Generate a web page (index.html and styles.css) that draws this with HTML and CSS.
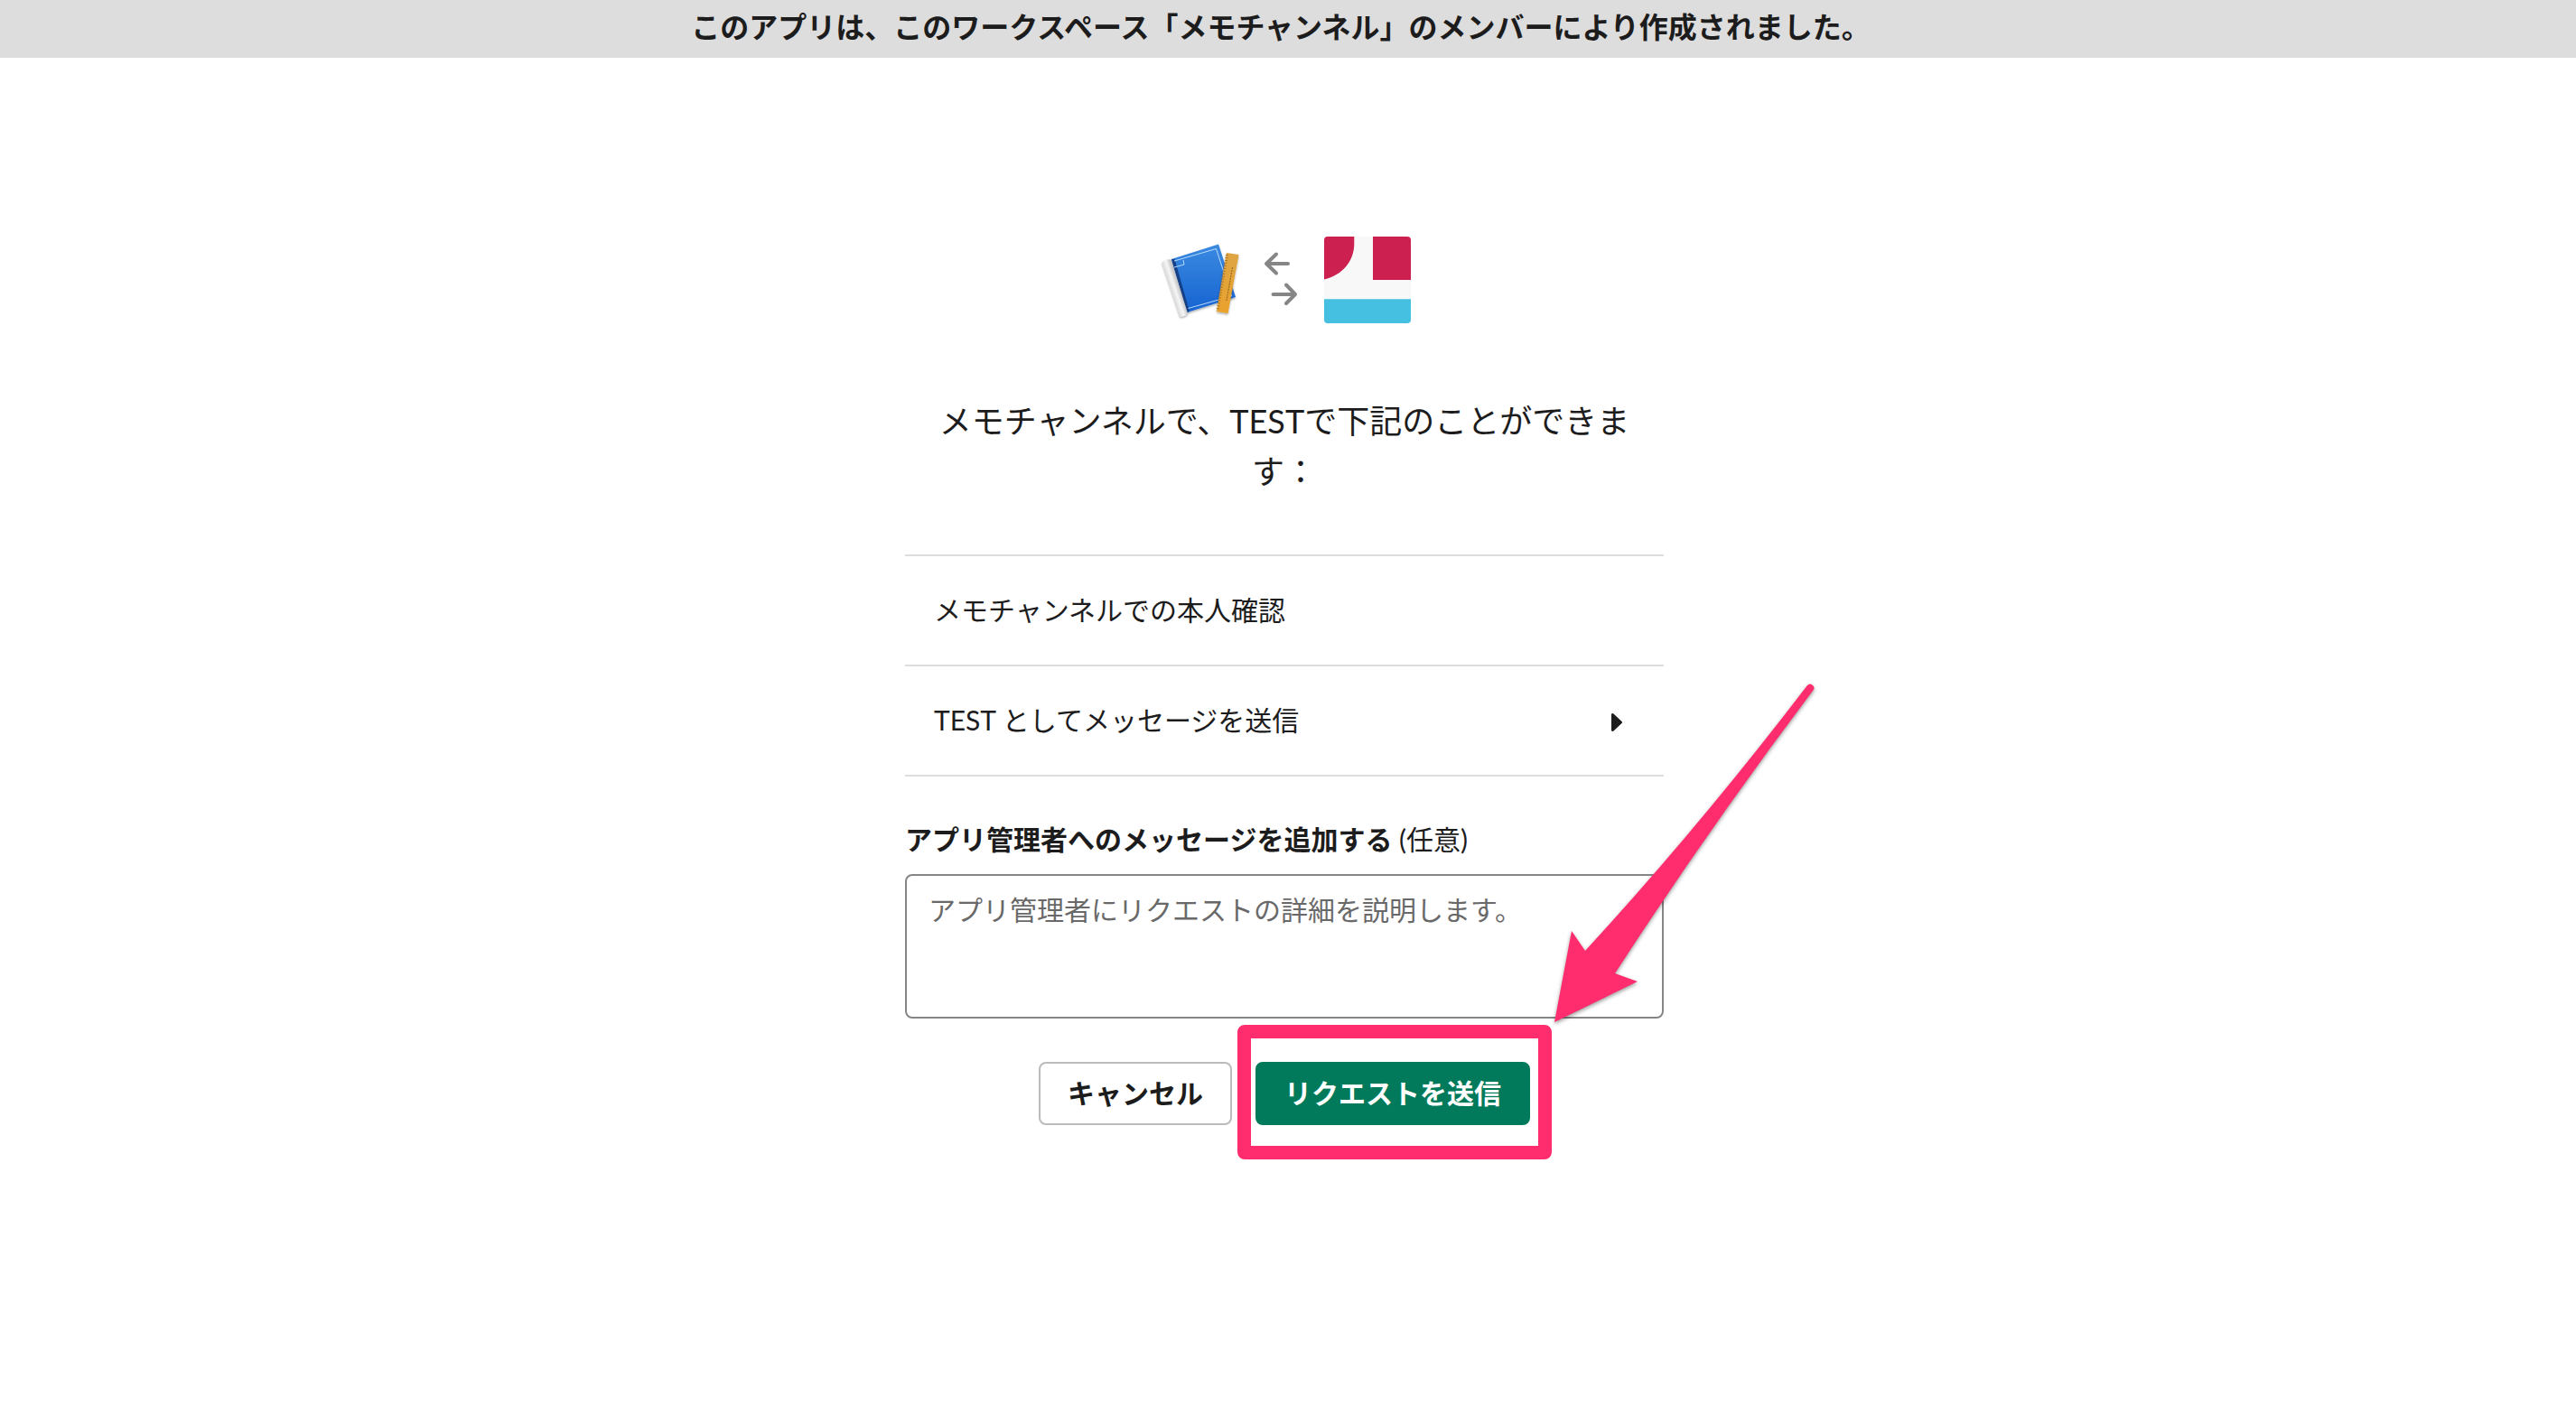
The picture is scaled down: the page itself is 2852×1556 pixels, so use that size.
FILE: index.html
```html
<!DOCTYPE html>
<html lang="ja">
<head>
<meta charset="utf-8">
<meta name="viewport" content="width=device-width, initial-scale=1">
<title>TEST | Slack</title>
<link rel="stylesheet" href="styles.css">
</head>
<body>
<header class="banner">このアプリは、このワークスペース「メモチャンネル」のメンバーにより作成されました。</header>
<main class="page">
  <div class="content">
    <div class="logos">
      <svg class="logo" viewBox="0 0 96 96" role="img" aria-label="TEST">
        <defs>
          <linearGradient id="sheet" x1="0" y1="0" x2="0" y2="1"><stop offset="0" stop-color="#3a8ae0"/><stop offset="1" stop-color="#1763d2"/></linearGradient>
          <linearGradient id="roll" gradientUnits="userSpaceOnUse" x1="14" y1="59" x2="26" y2="55"><stop offset="0" stop-color="#d9d9d9"/><stop offset=".4" stop-color="#f6f6f6"/><stop offset="1" stop-color="#a9a9ad"/></linearGradient>
          <linearGradient id="ruler" x1="0" y1="0" x2="0" y2="1"><stop offset="0" stop-color="#dda544"/><stop offset="1" stop-color="#eaa22c"/></linearGradient>
          <filter id="soft" x="-20%" y="-20%" width="140%" height="140%"><feDropShadow dx="0" dy="1.5" stdDeviation="1.2" flood-opacity=".35"/></filter>
        </defs>
        <g filter="url(#soft)">
          <path fill="url(#sheet)" d="M15 25 67 8.500 86 67 32 84Z"/>
          <path fill="#123f85" d="M15 25 18.500 25 35 83 32 84Z"/>
          <path fill="none" stroke="#b9dcff" stroke-width="1" d="M18 27 64.500 13.500 81.500 66 33.500 79.500M18 34 29 31 28 26"/>
          <path fill="url(#roll)" d="M4.500 28.500Q9 24 14.500 25.500L33 85Q30 89 24.500 88.500Z"/>
        </g>
        <g filter="url(#soft)">
          <path fill="url(#ruler)" d="M76 18 89.500 20 77.500 85 65 83Z"/>
          <path fill="none" stroke="#a8752a" stroke-width="3" stroke-dasharray="1 2" d="M76.500 20 66 82"/>
          <path fill="none" stroke="#9b6a21" stroke-width="1.200" stroke-dasharray="2 1" d="M82.500 34 76 71"/>
        </g>
      </svg>
      <svg class="exchange" viewBox="0 0 88 96" aria-hidden="true">
        <path d="M48 30H24M35 19.500 24 30 35 40.500M31.500 64H55.500M46 53.500 56 64 46 74"/>
      </svg>
      <svg class="logo logo-team" viewBox="0 0 96 96" role="img" aria-label="メモチャンネル">
        <path fill="#f8f8f9" d="M0 0H96V96H0Z"/>
        <path fill="#cc2050" d="M0 0H33.300V8C33.300 27 20 43 0 47.500ZM54 0H96V48H54Z"/>
        <path fill="#45c0e1" d="M0 69.300H96V96H0Z"/>
      </svg>
    </div>
    <h1 class="title">メモチャンネルで、TESTで下記のことができます：</h1>
    <ul class="scopes">
      <li class="scope">メモチャンネルでの本人確認</li>
      <li><button class="scope scope-toggle" type="button" aria-expanded="false">TEST としてメッセージを送信
        <svg class="caret" viewBox="0 -6 12 26" aria-hidden="true"><path d="M0 1Q1-1 3 1L11 8.500Q13 10 11 11.500L3 19Q1 21 0 19Z"/></svg>
      </button></li>
    </ul>
    <form class="request">
      <label class="label" for="message"><strong>アプリ管理者へのメッセージを追加する</strong> (任意)</label>
      <textarea class="message" id="message" placeholder="アプリ管理者にリクエストの詳細を説明します。"></textarea>
      <div class="actions">
        <button class="button" type="button">キャンセル</button>
        <div class="marked">
          <button class="button button-primary" type="submit">リクエストを送信</button>
          <div class="highlight"></div>
          <svg class="arrow" viewBox="0 0 300 400" aria-hidden="true"><path d="M5 380 24 279 39 301Q165 164 285 7Q288 4 291 7Q294 10 291 13Q175 167 72 326L97 335Z"/></svg>
        </div>
      </div>
    </form>
  </div>
</main>
</body>
</html>
```
FILE: styles.css
```css
* { box-sizing: border-box; }

body {
  margin: 0;
  background: #fff;
  color: #1d1c1d;
  font-family: Lato, "Noto Sans CJK JP", sans-serif;
  font-size: 30px;
  line-height: 40px;
}

.banner {
  padding: 10px 16px 14px 0;
  background: #ddd;
  font-size: 32px;
  font-weight: 700;
  text-align: center;
}

.page { padding: 198px 8px 80px 0; }

.content {
  max-width: 840px;
  margin: 0 auto;
}

.logos {
  display: flex;
  justify-content: center;
}

.logo { width: 96px; height: 96px; }
.logo-team { border-radius: 4px; }

.exchange {
  width: 88px;
  height: 96px;
  fill: none;
  stroke: #868686;
  stroke-width: 4;
  stroke-linecap: round;
  stroke-linejoin: round;
}

.title {
  margin: 80px 0 64px;
  padding: 0 32px;
  font-size: 36px;
  font-weight: 400;
  line-height: 56px;
  text-align: center;
}

.scopes {
  margin: 0;
  padding: 0;
  border-top: 2px solid #ddd;
  list-style: none;
}

.scope {
  display: flex;
  align-items: center;
  justify-content: space-between;
  width: 100%;
  padding: 39px 46px 41px 32px;
  border: 0;
  border-bottom: 2px solid #ddd;
}

.scope-toggle {
  background: none;
  color: inherit;
  font: inherit;
  text-align: left;
}

.caret { width: 12px; height: 26px; fill: #1d1c1d; }

.request { margin-top: 49px; }

.label { display: block; }

.message {
  display: block;
  width: 100%;
  height: 160px;
  margin-top: 19px;
  padding: 17px 24px;
  border: 2px solid #868686;
  border-radius: 8px;
  color: inherit;
  font: inherit;
  resize: none;
}

.message::placeholder { color: #696969; opacity: 1; }

.actions {
  display: flex;
  justify-content: center;
  gap: 26px;
  margin-top: 48px;
}

.button {
  display: block;
  height: 70px;
  padding: 0 30px 2px;
  border: 2px solid #bbb;
  border-radius: 8px;
  background: #fff;
  color: #1d1c1d;
  font: inherit;
  font-weight: 700;
}

.button-primary {
  border-color: #007a5a;
  background: #007a5a;
  color: #fff;
}

.marked { position: relative; }

.highlight {
  position: absolute;
  inset: -41px -24px -38px -20px;
  border: 15px solid #ff2d6e;
  border-radius: 8px;
  pointer-events: none;
}

.arrow {
  position: absolute;
  top: -424px;
  left: 326px;
  width: 300px;
  height: 400px;
  fill: #ff2d6e;
  filter: drop-shadow(0 2px 2px rgba(0, 0, 0, .4));
  pointer-events: none;
}
```
